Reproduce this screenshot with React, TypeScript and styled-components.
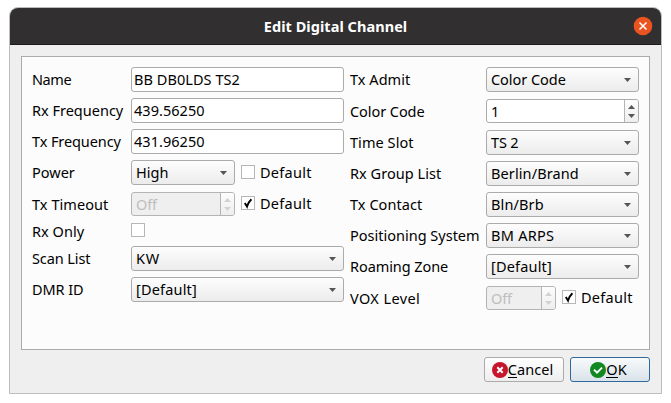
import React from 'react';
import styled, { createGlobalStyle, css } from 'styled-components';

const GlobalStyle = createGlobalStyle`
  * { box-sizing: border-box; }
  body {
    margin: 0;
    background: #fff;
    color: #000;
    font: 14.5px/25px "Noto Sans", sans-serif;
  }
`;

const Page = styled.div`
  padding: 7px 0 0 9px;
  height: 403px;
`;

const Dialog = styled.main`
  width: 653px;
  height: 387px;
  border: 1px solid #bcbcbc;
  border-radius: 9px 9px 0 0;
  background: #efefef;
  overflow: hidden;
`;

const TitleBar = styled.header`
  display: grid;
  grid-template-columns: 40px 1fr 40px;
  align-items: center;
  height: 37px;
  background: #322f30;
  border-bottom: 1px solid #1d1b1c;
  color: #fff;
`;

const Title = styled.h1`
  grid-column: 2;
  margin: 0;
  padding-top: 1px;
  text-align: center;
  font-size: 14.5px;
  font-weight: 700;
  letter-spacing: 0.05px;
`;

const CloseButton = styled.button`
  justify-self: end;
  display: flex;
  width: 20px;
  height: 20px;
  margin-right: 8px;
  padding: 0;
  border: 0;
  background: none;
`;

const Panel = styled.section`
  display: flex;
  gap: 6px;
  width: 629px;
  height: 294px;
  margin: 11px 0 0 11px;
  padding: 10px;
  border: 1px solid #ababab;
  background: #fcfcfc;
`;

const Column = styled.div<{ $labels: number }>`
  display: grid;
  grid-template-columns: ${p => p.$labels}px auto;
  align-content: start;
  row-gap: 6px;
`;

const Row = styled.div<{ $height?: number; $align?: string; $line?: number }>`
  display: grid;
  grid-template-columns: subgrid;
  grid-column: 1 / -1;
  height: ${p => p.$height ?? 25}px;
  line-height: ${p => p.$line ?? 25}px;
  align-items: ${p => p.$align ?? 'start'};
`;

const Text = styled.span<{ $track?: number }>`
  letter-spacing: ${p => p.$track ?? 0}px;
  white-space: pre;
`;

const Controls = styled.div<{ $top?: number }>`
  display: flex;
  align-items: flex-start;
  gap: 6px;
  padding-top: ${p => p.$top ?? 0}px;
`;

const frame = css`
  border: 1px solid #ababab;
  border-radius: 3px;
`;

const Field = styled.div`
  ${frame}
  width: 213px;
  height: 25px;
  padding-left: 2px;
  line-height: 23px;
  background: #fff;
`;

const Combo = styled.div<{ $width: number }>`
  ${frame}
  display: flex;
  align-items: center;
  justify-content: space-between;
  width: ${p => p.$width}px;
  height: 25px;
  padding: 0 7px 0 4px;
  line-height: 23px;
  background: linear-gradient(#fdfdfd, #ececec);
`;

const Spin = styled.div<{ $width: number; $disabled?: boolean }>`
  ${frame}
  display: flex;
  width: ${p => p.$width}px;
  height: 24px;
  padding-left: 4px;
  line-height: 22px;
  overflow: hidden;
  background: ${p => (p.$disabled ? '#efefef' : '#fff')};
  color: ${p => (p.$disabled ? '#bebebe' : '#000')};
  ${p => p.$disabled && 'border-color: #b4b4b4;'}
`;

const Steppers = styled.div<{ $disabled?: boolean }>`
  display: flex;
  flex-direction: column;
  align-items: center;
  justify-content: center;
  gap: 5px;
  width: 14px;
  margin-left: auto;
  border-left: 1px solid #b4b4b4;
  background: linear-gradient(#fdfdfd, #eeeeee);
  color: ${p => (p.$disabled ? '#d2d2d2' : '#555')};
`;

const CheckLabel = styled.label<{ $height: number }>`
  display: flex;
  align-items: flex-start;
  gap: 5px;
  height: ${p => p.$height}px;
  line-height: ${p => p.$height}px;
`;

const Box = styled.span<{ $top: number }>`
  display: flex;
  width: 14px;
  height: 14px;
  margin-top: ${p => p.$top}px;
  border: 1px solid #b7b7b7;
  background: #fff;
`;

const Footer = styled.footer`
  display: flex;
  justify-content: flex-end;
  gap: 6px;
  padding: 7px 11px 0 0;
`;

const PushButton = styled.button<{ $primary?: boolean }>`
  ${frame}
  display: flex;
  align-items: center;
  justify-content: center;
  width: 80px;
  height: 25px;
  padding: 0 3px 0 0;
  color: #000;
  font: inherit;
  line-height: 23px;
  background: linear-gradient(#fefefe, #eeeeee);
  ${p => p.$primary && css`
    border-color: #30699b;
    background: linear-gradient(#f8fafb, #d9e3ea);
  `}
`;

const Mnemonic = styled.span`
  display: inline-block;
  height: 20px;
  line-height: 23px;
  border-bottom: 1px solid #000;
  vertical-align: top;
`;

const Arrow = () => (
  <svg width="7" height="4" viewBox="0 0 7 4"><path d="M0 0h7L3.5 4z" fill="#555" /></svg>
);

const StepArrows = ({ disabled }: { disabled?: boolean }) => (
  <Steppers $disabled={disabled}>
    <svg width="7" height="4" viewBox="0 0 7 4"><path d="M0 4h7L3.5 0z" fill="currentColor" /></svg>
    <svg width="7" height="4" viewBox="0 0 7 4"><path d="M0 0h7L3.5 4z" fill="currentColor" /></svg>
  </Steppers>
);

const Select = ({ value, width = 153, track }: { value: string; width?: number; track?: number }) => (
  <Combo $width={width}><Text $track={track}>{value}</Text><Arrow /></Combo>
);

const Check = ({ checked, label, height = 23 }: { checked?: boolean; label?: string; height?: number }) => (
  <CheckLabel $height={height}>
    <Box $top={Math.floor((height - 14) / 2)}>
      {checked && (
        <svg width="12" height="12" viewBox="0 0 12 12">
          <path d="M2.8 6.1 5 9.6Q6.2 5.2 9.4 2.2" fill="none" stroke="#000" strokeWidth="1.9" />
        </svg>
      )}
    </Box>
    {label && <Text $track={0.29}>{label}</Text>}
  </CheckLabel>
);

export default function App() {
  return (
    <Page>
      <GlobalStyle />
      <Dialog>
        <TitleBar>
          <Title>Edit Digital Channel</Title>
          <CloseButton aria-label="Close">
            <svg width="20" height="20" viewBox="0 0 20 20">
              <circle cx="10" cy="10" r="9.3" fill="#e95420" />
              <path d="m6.5 6.5 7 7m0-7-7 7" stroke="#fff" strokeWidth="1.5" />
            </svg>
          </CloseButton>
        </TitleBar>
        <Panel>
          <Column $labels={99}>
            <Row>
              <Text $track={-0.4}>Name</Text>
              <Field><Text $track={0.06}>BB DB0LDS TS2</Text></Field>
            </Row>
            <Row>
              <Text>Rx Frequency</Text>
              <Field><Text $track={0.04}>439.56250</Text></Field>
            </Row>
            <Row>
              <Text $track={-0.1}>Tx Frequency</Text>
              <Field><Text $track={0.04}>431.96250</Text></Field>
            </Row>
            <Row $height={26}>
              <Text>Power</Text>
              <Controls><Select value="High" width={104} /><Check label="Default" height={25} /></Controls>
            </Row>
            <Row $height={24}>
              <Text $track={0.06}>Tx Timeout</Text>
              <Controls>
                <Spin $width={104} $disabled><Text $track={-0.16}>Off</Text><StepArrows disabled /></Spin>
                <Check checked label="Default" />
              </Controls>
            </Row>
            <Row $height={18} $line={19}>
              <Text $track={0.04}>Rx Only</Text>
              <Check height={17} />
            </Row>
            <Row>
              <Text $track={-0.1}>Scan List</Text>
              <Select value="KW" width={213} track={0.72} />
            </Row>
            <Row>
              <Text $track={-0.09}>DMR ID</Text>
              <Select value="[Default]" width={213} track={0.18} />
            </Row>
          </Column>
          <Column $labels={136}>
            <Row>
              <Text $track={0.04}>Tx Admit</Text>
              <Select value="Color Code" track={-0.04} />
            </Row>
            <Row $height={26} $align="center">
              <Text $track={-0.07}>Color Code</Text>
              <Spin $width={153}><Text>1</Text><StepArrows /></Spin>
            </Row>
            <Row>
              <Text $track={0.06}>Time Slot</Text>
              <Select value="TS 2" track={-0.16} />
            </Row>
            <Row>
              <Text $track={0.05}>Rx Group List</Text>
              <Select value="Berlin/Brand" track={0.1} />
            </Row>
            <Row>
              <Text $track={0.06}>Tx Contact</Text>
              <Select value="Bln/Brb" track={0.13} />
            </Row>
            <Row>
              <Text>Positioning System</Text>
              <Select value="BM ARPS" track={0.27} />
            </Row>
            <Row>
              <Text $track={-0.08}>Roaming Zone</Text>
              <Select value="[Default]" track={0.18} />
            </Row>
            <Row $line={27}>
              <Text $track={0.39}>VOX Level</Text>
              <Controls $top={1}>
                <Spin $width={70} $disabled><Text $track={-0.16}>Off</Text><StepArrows disabled /></Spin>
                <Check checked label="Default" />
              </Controls>
            </Row>
          </Column>
        </Panel>
        <Footer>
          <PushButton>
            <svg width="16" height="16" viewBox="0 0 16 16">
              <circle cx="8" cy="8" r="8" fill="#c6162e" />
              <path d="m5.3 5.3 5.4 5.4m0-5.4-5.4 5.4" stroke="#fff" strokeWidth="2" />
            </svg>
            <Text $track={0.06}><Mnemonic>C</Mnemonic>ancel</Text>
          </PushButton>
          <PushButton $primary>
            <svg width="16" height="16" viewBox="0 0 16 16">
              <circle cx="8" cy="8" r="8" fill="#118822" />
              <path d="m4 7.6 3 3 5-5" fill="none" stroke="#fff" strokeWidth="1.9" />
            </svg>
            <Text><Mnemonic>O</Mnemonic>K</Text>
          </PushButton>
        </Footer>
      </Dialog>
    </Page>
  );
}
